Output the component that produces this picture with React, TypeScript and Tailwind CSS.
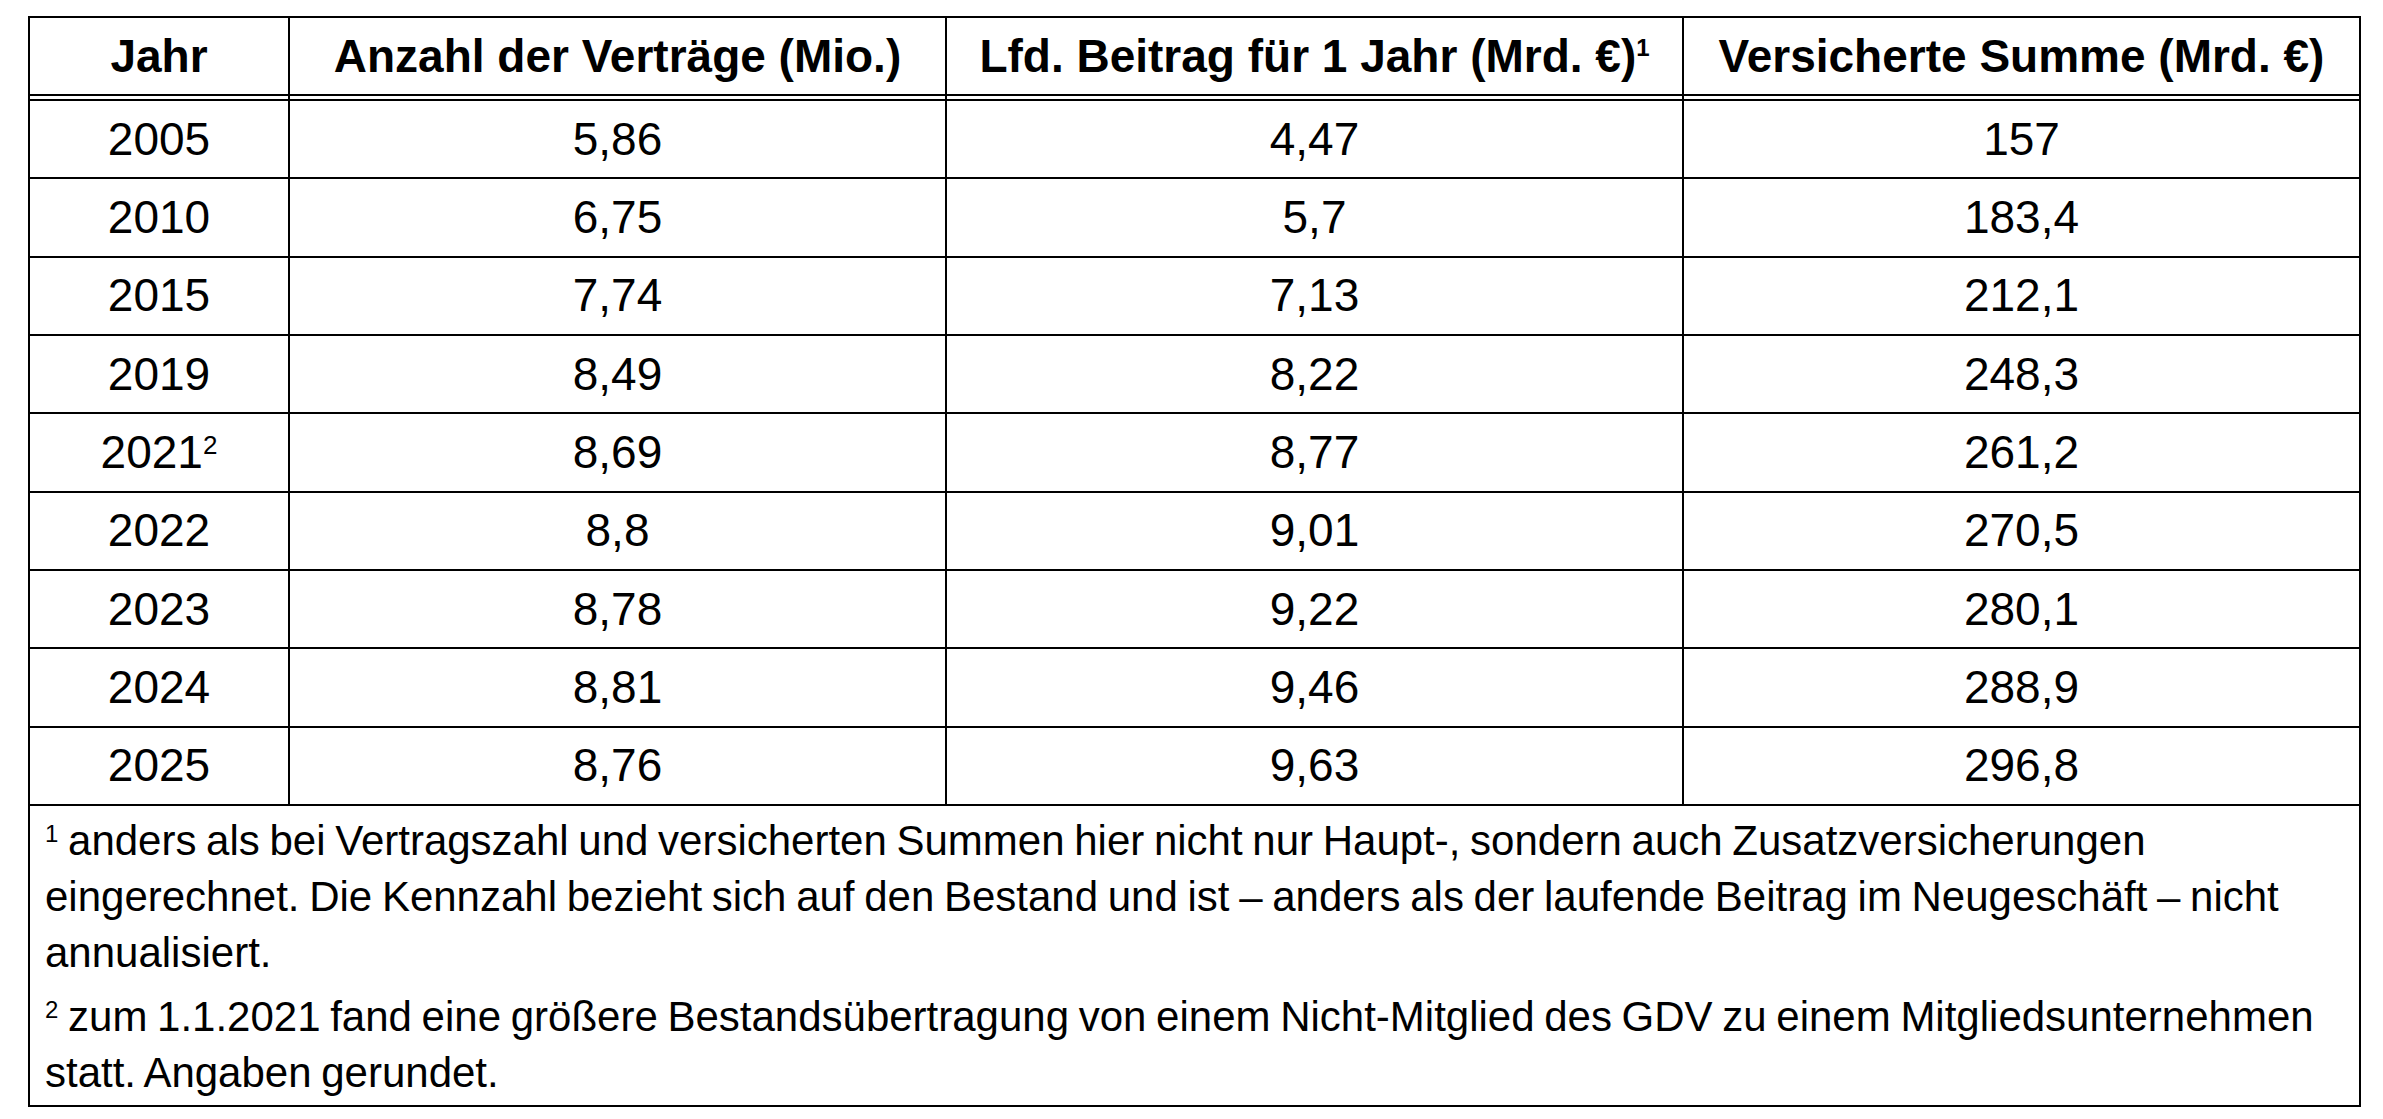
import React from "react";

const rows: [React.ReactNode, string, string, string][] = [
  ["2005", "5,86", "4,47", "157"],
  ["2010", "6,75", "5,7", "183,4"],
  ["2015", "7,74", "7,13", "212,1"],
  ["2019", "8,49", "8,22", "248,3"],
  [
    <span>
      2021<span className="text-[26px] leading-none align-[14px]">2</span>
    </span>,
    "8,69",
    "8,77",
    "261,2",
  ],
  ["2022", "8,8", "9,01", "270,5"],
  ["2023", "8,78", "9,22", "280,1"],
  ["2024", "8,81", "9,46", "288,9"],
  ["2025", "8,76", "9,63", "296,8"],
];

export default function App() {
  return (
    <div className="min-h-screen bg-white pt-[16px] pl-[28px] font-['Liberation_Sans',Arial,sans-serif] text-black">
      <div className="w-[2333px] border-2 border-black">
        {/* header */}
        <div className="grid grid-cols-[260px_657px_737px_675px] h-[76px] text-[46px] font-bold">
          <div className="border-r-2 border-black flex items-center justify-center">Jahr</div>
          <div className="border-r-2 border-black flex items-center justify-center">Anzahl der Verträge (Mio.)</div>
          <div className="border-r-2 border-black flex items-center justify-center">
            <span>
              Lfd. Beitrag für 1 Jahr (Mrd. €)<span className="text-[24px] leading-none align-[16px]">1</span>
            </span>
          </div>
          <div className="flex items-center justify-center">Versicherte Summe (Mrd. €)</div>
        </div>
        {/* double rule */}
        <div className="grid grid-cols-[260px_657px_737px_675px] h-[7px]">
          <div className="border-t-2 border-b-2 border-r-2 border-black"></div>
          <div className="border-t-2 border-b-2 border-r-2 border-black"></div>
          <div className="border-t-2 border-b-2 border-r-2 border-black"></div>
          <div className="border-t-2 border-b-2 border-black"></div>
        </div>
        {/* data rows */}
        {rows.map((r, i) => (
          <div
            key={i}
            className="grid grid-cols-[260px_657px_737px_675px] h-[78.33px] border-b-2 border-black text-[46px]"
          >
            <div className="border-r-2 border-black flex items-center justify-center">{r[0]}</div>
            <div className="border-r-2 border-black flex items-center justify-center">{r[1]}</div>
            <div className="border-r-2 border-black flex items-center justify-center">{r[2]}</div>
            <div className="flex items-center justify-center">{r[3]}</div>
          </div>
        ))}
        {/* footnotes */}
        <div className="pl-[15px] pr-[4px] pt-[7px] pb-[4px] text-[42px] leading-[56px] [word-spacing:-2px]">
          <p>
            <span className="text-[24px] leading-none align-[13px]">1</span> anders als bei Vertragszahl und
            versicherten Summen hier nicht nur Haupt-, sondern auch Zusatzversicherungen eingerechnet. Die Kennzahl
            bezieht sich auf den Bestand und ist – anders als der laufende Beitrag im Neugeschäft – nicht
            annualisiert.
          </p>
          <p className="mt-[8px]">
            <span className="text-[24px] leading-none align-[13px]">2</span> zum 1.1.2021 fand eine größere
            Bestandsübertragung von einem Nicht-Mitglied des GDV zu einem Mitgliedsunternehmen statt. Angaben
            gerundet.
          </p>
        </div>
      </div>
    </div>
  );
}
